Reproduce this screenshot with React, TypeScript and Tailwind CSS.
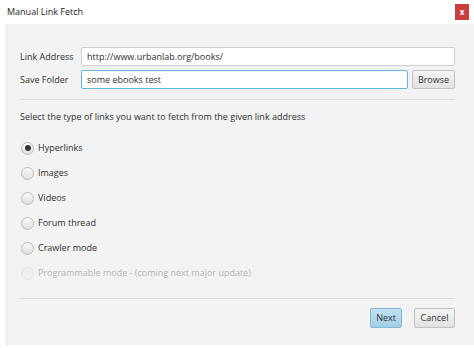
const options = [
  { label: 'Hyperlinks', checked: true },
  { label: 'Images' },
  { label: 'Videos' },
  { label: 'Forum thread' },
  { label: 'Crawler mode' },
  { label: 'Programmable mode - (coming next major update)', disabled: true },
];

function Radio({ checked, disabled }: { checked?: boolean; disabled?: boolean }) {
  return (
    <span
      className={`w-[13px] h-[13px] shrink-0 rounded-full border flex items-center justify-center ${
        disabled
          ? 'border-[#e4e4e4] bg-[#f0f0f0]'
          : 'border-[#bdbdbd] bg-gradient-to-b from-[#f9f9f9] to-[#e0e0e0]'
      }`}
    >
      {checked && <span className="w-[6px] h-[6px] rounded-full bg-[#333]" />}
    </span>
  );
}

export default function App() {
  return (
    <div
      className="w-[474px] h-[348px] bg-white flex flex-col text-[9px] leading-[12px] text-[#2e2e2e] whitespace-nowrap"
      style={{ fontFamily: '"Open Sans", "Liberation Sans", sans-serif' }}
    >
      <div className="h-[24px] shrink-0 flex items-center justify-between pl-[7px] pr-[5px]">
        <span className="text-[9px] text-[#222]">Manual Link Fetch</span>
        <span className="w-[14px] h-[16px] bg-[#c9403f] text-white text-[8px] font-bold flex items-center justify-center leading-none">
          x
        </span>
      </div>
      <div className="ml-[6px] h-[321px] shrink-0 bg-[#f3f3f3] border-l border-[#e6e6e6] flex flex-col pl-[13px] pr-[19px]">
        <div className="pt-[23px] flex flex-col gap-[4px]">
          <div className="flex items-center">
            <span className="w-[61px] shrink-0">Link Address</span>
            <div className="flex-1 h-[19px] bg-white border border-[#cfcfcf] rounded-[2px] flex items-center px-[5px]">
              http://www.urbanlab.org/books/
            </div>
          </div>
          <div className="flex items-center">
            <span className="w-[61px] shrink-0">Save Folder</span>
            <div className="flex-1 h-[19px] bg-white border border-[#5fb8d6] rounded-[2px] flex items-center px-[5px]">
              some ebooks test
            </div>
            <button className="ml-[4px] w-[43px] h-[19px] shrink-0 border border-[#c2c2c2] rounded-[2px] bg-gradient-to-b from-[#f4f4f4] to-[#e2e2e2] text-[#333] flex items-center justify-center">
              Browse
            </button>
          </div>
        </div>
        <div className="mt-[10px] border-t border-[#dcdcdc]" />
        <div className="mt-[11px]">Select the type of links you want to fetch from the given link address</div>
        <div className="mt-[17px] flex flex-col gap-[9px]">
          {options.map((o) => (
            <div key={o.label} className="flex items-center h-[16px] pl-[1px]">
              <Radio checked={o.checked} disabled={o.disabled} />
              <span className={`ml-[4px] ${o.disabled ? 'text-[#b4b4b4]' : ''}`}>{o.label}</span>
            </div>
          ))}
        </div>
        <div className="mt-[17px] border-t border-[#dcdcdc]" />
        <div className="mt-[9px] flex justify-end gap-[12px]">
          <button className="w-[32px] h-[20px] border border-[#84b9d6] rounded-[2px] bg-gradient-to-b from-[#c2e2f3] to-[#9fcde6] text-[#333] flex items-center justify-center">
            Next
          </button>
          <button className="w-[41px] h-[20px] border border-[#c2c2c2] rounded-[2px] bg-gradient-to-b from-[#f4f4f4] to-[#e2e2e2] text-[#333] flex items-center justify-center">
            Cancel
          </button>
        </div>
      </div>
    </div>
  );
}
